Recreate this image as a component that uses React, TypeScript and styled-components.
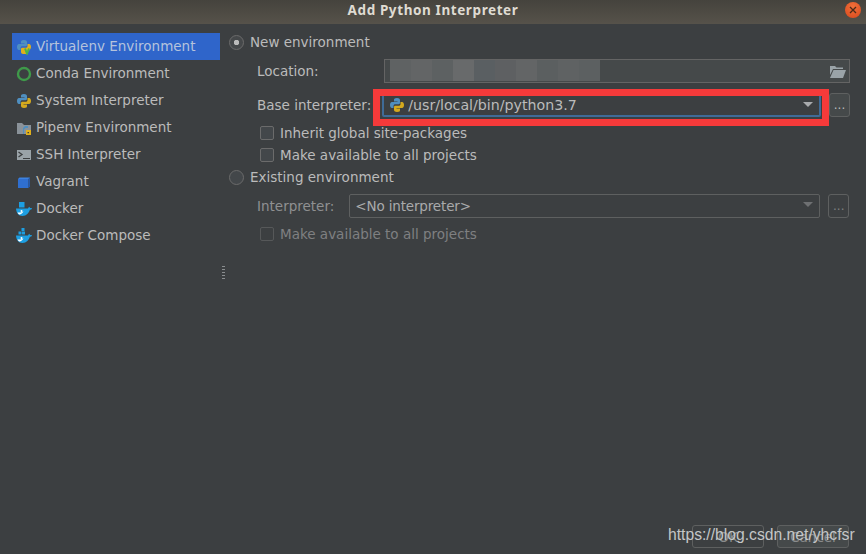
import styled, { createGlobalStyle } from "styled-components";

const GlobalStyle = createGlobalStyle`
  html, body {
    margin: 0;
    padding: 0;
    background: #3c3f41;
  }
  body {
    font-family: "DejaVu Sans", sans-serif;
    font-size: 13.5px;
    color: #bbbbbb;
  }
`;

function PythonIcon() {
  return (
    <svg width="16" height="16" viewBox="0 0 16 16">
      <path
        fill="#4f8fc0"
        d="M8 1C5.2 1 5 2 5 3v1.5h3.5V5H3C1.5 5 1 6.5 1 8s.5 3 2 3h1.5V9c0-1.2.8-1.800 1.800-1.800h3.400c.9 0 1.300-.6 1.300-1.400V3c0-1.200-1.300-2-3-2z"
      />
      <path
        fill="#d4a91e"
        d="M8 15c2.800 0 3-1 3-2v-1.500H7.500V11H13c1.500 0 2-1.500 2-3s-.5-3-2-3h-1.500v2c0 1.200-.8 1.800-1.800 1.800H6.300C5.400 8.800 5 9.400 5 10.200V13c0 1.200 1.300 2 3 2z"
      />
    </svg>
  );
}

function VirtualenvIcon() {
  return (
    <svg width="16" height="16" viewBox="0 0 16 16">
      <path
        fill="#4f8fc0"
        d="M8 1C5.200 1 5 2 5 3v1.500h3.500V5H3C1.500 5 1 6.500 1 8s.5 3 2 3h1.500V9c0-1.200.8-1.800 1.800-1.800h3.400c.9 0 1.300-.6 1.300-1.400V3c0-1.200-1.300-2-3-2z"
      />
      <path
        fill="#e0b01c"
        d="M7 15c-1 0-2-.8-2-2v-2.800c0-.8.4-1.400 1.300-1.400h3.400c1 0 1.800-.6 1.800-1.800V5H13c1.500 0 2 1.500 2 3 0 1-.5 2-1 2.500L10 15z"
      />
      <path fill="none" stroke="#49b54a" strokeWidth="2" d="M9 9.500l2 5 2-5" />
    </svg>
  );
}

function CondaIcon() {
  return (
    <svg width="16" height="16" viewBox="0 0 16 16">
      <circle cx="8" cy="8" r="6" fill="none" stroke="#3f9a4a" strokeWidth="2.400" />
    </svg>
  );
}

function PipenvIcon() {
  return (
    <svg width="16" height="16" viewBox="0 0 16 16">
      <path fill="#8a9299" d="M1 3h5l2 2h7v9H1z" />
      <path fill="#4f8fc0" d="M9 6h3v2H9.500L8 9.500V14H7V8z" />
      <path fill="#e0b01c" d="M10 10h5v5H10z" />
      <path fill="#3c3f41" d="M11.500 12h1.500v1.300h-1.500z" />
    </svg>
  );
}

function SshIcon() {
  return (
    <svg width="16" height="16" viewBox="0 0 16 16">
      <path fill="#9aa3a8" d="M1 3h14v10H1z" />
      <path fill="none" stroke="#3c3f41" strokeWidth="1.300" d="M2.500 5l3.500 2.500L2.500 10" />
      <path fill="#3c3f41" d="M7 11h7v1H7z" />
    </svg>
  );
}

function VagrantIcon() {
  return (
    <svg width="16" height="16" viewBox="0 0 16 16">
      <path fill="#2f6fd0" d="M2 5h10.500v9H2z" />
      <path fill="#3c82e0" d="M2 5l1.500-1.500H14L12.500 5z" />
      <path fill="#2459aa" d="M12.500 5L14 3.500v9L12.500 14z" />
    </svg>
  );
}

function DockerIcon({ compose }: { compose?: boolean }) {
  return (
    <svg width="16" height="16" viewBox="0 0 16 16">
      {compose ? (
        <path fill="#1d9fe2" d="M5.500 0h3v3h-3zM2.500 3.500h3v3h-3zM6 3.500h3v3H6z" />
      ) : (
        <path fill="#1d9fe2" d="M3 1h5.500v5.500H3z" />
      )}
      <path
        fill="#1d9fe2"
        d="M0 7.500h12c.3-1 .9-1.500 1.300-1.800.4.5.7 1 .7 1.500.6-.2 1.400-.2 2 .2-.5 1-1.300 1.400-2.200 1.400C13 12 10.500 15 6.500 15 2.500 15 .3 12 0 7.500z"
      />
      <path fill="#ffffff" d="M1.500 11.500c2 .3 4.500 0 6-1.200-.8 2.200-3 3.500-4.300 3.200-.7-.4-1.300-1.200-1.700-2z" />
      <circle cx="5.500" cy="10" r="1" fill="#ffffff" />
    </svg>
  );
}

const items = [
  { label: "Virtualenv Environment", icon: <VirtualenvIcon />, selected: true },
  { label: "Conda Environment", icon: <CondaIcon /> },
  { label: "System Interpreter", icon: <PythonIcon /> },
  { label: "Pipenv Environment", icon: <PipenvIcon /> },
  { label: "SSH Interpreter", icon: <SshIcon /> },
  { label: "Vagrant", icon: <VagrantIcon /> },
  { label: "Docker", icon: <DockerIcon /> },
  { label: "Docker Compose", icon: <DockerIcon compose /> },
];

const mosaic = ["#5f6263", "#636566", "#5d6162", "#686a6b", "#5a5f62", "#5e6062", "#636566", "#5b5f60", "#5f6263", "#5c6061"];

export default function App() {
  return (
    <Dialog>
      <GlobalStyle />
      <TitleBar>
        Add Python Interpreter
        <CloseButton>
          <svg width="8" height="8" viewBox="0 0 8 8">
            <path stroke="#4a2a18" strokeWidth="1.300" d="M1 1l6 6M7 1L1 7" />
          </svg>
        </CloseButton>
      </TitleBar>
      <Body>
        <Sidebar>
          {items.map((item) => (
            <SideItem key={item.label} $selected={item.selected}>
              {item.icon}
              <SideLabel>{item.label}</SideLabel>
            </SideItem>
          ))}
        </Sidebar>
        <Splitter />
        <Main>
          <RadioRow>
            <Radio $checked />
            New environment
          </RadioRow>
          <LocationRow>
            <FieldLabel>Location:</FieldLabel>
            <LocationField>
              <Mosaic>
                {mosaic.map((c, i) => (
                  <MosaicCell key={i} $color={c} />
                ))}
              </Mosaic>
              <svg width="16" height="13" viewBox="0 0 16 13">
                <path fill="#9aa3a8" d="M0 1h5l1.500 1.500H13V4H3L0 10z" />
                <path fill="#9aa3a8" d="M3.500 5H16l-3 8H0z" />
              </svg>
            </LocationField>
          </LocationRow>
          <BaseRow>
            <FieldLabel>Base interpreter:</FieldLabel>
            <FocusCombo>
              <PythonSmall>
                <PythonIcon />
              </PythonSmall>
              /usr/local/bin/python3.7
              <Arrow />
            </FocusCombo>
            <DotsButton>...</DotsButton>
          </BaseRow>
          <ChecksGroup>
            <CheckRow>
              <Check />
              Inherit global site-packages
            </CheckRow>
            <CheckRow>
              <Check />
              Make available to all projects
            </CheckRow>
          </ChecksGroup>
          <RadioRow $second>
            <Radio />
            Existing environment
          </RadioRow>
          <InterpreterRow>
            <FieldLabel $disabled>Interpreter:</FieldLabel>
            <DisabledCombo>
              &lt;No interpreter&gt;
              <Arrow $disabled />
            </DisabledCombo>
            <DotsButton $disabled>...</DotsButton>
          </InterpreterRow>
          <LastCheck>
            <CheckRow $disabled>
              <Check $disabled />
              Make available to all projects
            </CheckRow>
          </LastCheck>
        </Main>
      </Body>
      <Footer>
        <FooterButton>OK</FooterButton>
        <FooterButton $filled>Cancel</FooterButton>
      </Footer>
      <Highlight />
      <Watermark>https://blog.csdn.net/yhcfsr</Watermark>
    </Dialog>
  );
}

const Dialog = styled.div`
  position: relative;
  width: 866px;
  height: 554px;
  overflow: hidden;
  display: flex;
  flex-direction: column;
  background: #3c3f41;
`;

const TitleBar = styled.div`
  position: relative;
  flex: none;
  box-sizing: border-box;
  height: 24px;
  padding-bottom: 4px;
  display: flex;
  align-items: center;
  justify-content: center;
  background: linear-gradient(#45433d, #56524a);
  color: #dfdbd2;
  font-family: "Noto Sans", sans-serif;
  font-weight: 700;
  font-size: 13.500px;
  letter-spacing: 0.600px;
`;

const CloseButton = styled.div`
  position: absolute;
  right: 5px;
  top: 2px;
  width: 16px;
  height: 16px;
  border-radius: 50%;
  display: flex;
  align-items: center;
  justify-content: center;
  background: radial-gradient(circle at 50% 30%, #f0703a, #d9481c);
`;

const Body = styled.div`
  flex: 1;
  display: flex;
  min-height: 0;
`;

const Sidebar = styled.div`
  flex: none;
  width: 208px;
  margin-left: 12px;
  padding-top: 9px;
`;

const SideItem = styled.div<{ $selected?: boolean }>`
  height: 27px;
  display: flex;
  align-items: center;
  gap: 4px;
  padding-left: 4px;
  background: ${(p) => (p.$selected ? "#2f65ca" : "transparent")};
  color: ${(p) => (p.$selected ? "#b5c3dc" : "#bbbbbb")};
  white-space: nowrap;
`;

const SideLabel = styled.span`
  margin-top: -2px;
`;

const Splitter = styled.div`
  flex: none;
  align-self: flex-start;
  width: 3px;
  height: 14px;
  margin: 242px 2px 0 2px;
  background: repeating-linear-gradient(#8a8d8f 0 1px, transparent 1px 3px);
`;

const Main = styled.div`
  flex: 1;
  min-width: 0;
  padding: 9px 16px 0 2px;
  display: flex;
  flex-direction: column;
`;

const RadioRow = styled.div<{ $second?: boolean }>`
  height: 18px;
  display: flex;
  align-items: center;
  gap: 6px;
  margin-top: ${(p) => (p.$second ? "2px" : "0")};
`;

const Radio = styled.span<{ $checked?: boolean }>`
  flex: none;
  box-sizing: border-box;
  width: 15px;
  height: 15px;
  border-radius: 50%;
  border: 1px solid #6b6b6b;
  background: ${(p) =>
    p.$checked ? "radial-gradient(circle, #bbbbbb 0 2.500px, #45484a 3px)" : "#43474a"};
`;

const FieldLabel = styled.span<{ $disabled?: boolean }>`
  flex: none;
  color: ${(p) => (p.$disabled ? "#8f9091" : "#bbbbbb")};
`;

const LocationRow = styled.div`
  display: flex;
  align-items: center;
  height: 24px;
  margin-top: 8px;
  padding-left: 28px;
  gap: 65px;
`;

const LocationField = styled.div`
  box-sizing: border-box;
  flex: 1;
  height: 24px;
  display: flex;
  align-items: center;
  justify-content: space-between;
  padding-right: 3px;
  background: #45494a;
  border: 1px solid #646464;
`;

const Mosaic = styled.div`
  display: flex;
  height: 21px;
  margin: -2px 0 0 5px;
`;

const MosaicCell = styled.span<{ $color: string }>`
  width: 21px;
  background: ${(p) => p.$color};
`;

const BaseRow = styled.div`
  display: flex;
  align-items: center;
  height: 24px;
  margin-top: 10px;
  padding-left: 28px;
`;

const FocusCombo = styled.div`
  position: relative;
  box-sizing: border-box;
  width: 439px;
  height: 24px;
  margin-left: 11px;
  display: flex;
  align-items: center;
  padding-left: 5px;
  gap: 3px;
  border: 2px solid #3f6b98;
  border-radius: 2px;
  background: #3c3f41;
  font-size: 14.200px;
`;

const PythonSmall = styled.span`
  display: flex;
`;

const Arrow = styled.span<{ $disabled?: boolean }>`
  position: absolute;
  right: 6px;
  top: 7px;
  width: 0;
  height: 0;
  border-left: 5px solid transparent;
  border-right: 5px solid transparent;
  border-top: 5px solid ${(p) => (p.$disabled ? "#6e7072" : "#a9abad")};
`;

const DotsButton = styled.div<{ $disabled?: boolean }>`
  flex: none;
  box-sizing: border-box;
  width: 21px;
  height: 24px;
  margin-left: 8px;
  display: flex;
  align-items: center;
  justify-content: center;
  border: 1px solid #5e6060;
  border-radius: 3px;
  background: ${(p) => (p.$disabled ? "transparent" : "#45494a")};
  color: ${(p) => (p.$disabled ? "#808182" : "#bbbbbb")};
  font-size: 12px;
`;

const ChecksGroup = styled.div`
  margin-top: 5px;
`;

const LastCheck = styled.div`
  margin-top: 5px;
`;

const CheckRow = styled.div<{ $disabled?: boolean }>`
  height: 22px;
  display: flex;
  align-items: center;
  gap: 6px;
  padding-left: 31px;
  color: ${(p) => (p.$disabled ? "#7f8081" : "#bbbbbb")};
`;

const Check = styled.span<{ $disabled?: boolean }>`
  flex: none;
  box-sizing: border-box;
  width: 14px;
  height: 14px;
  border-radius: 2px;
  border: 1px solid ${(p) => (p.$disabled ? "#565859" : "#6b6b6b")};
  background: ${(p) => (p.$disabled ? "transparent" : "#43474a")};
`;

const InterpreterRow = styled.div`
  display: flex;
  align-items: center;
  height: 24px;
  margin-top: 8px;
  padding-left: 28px;
`;

const DisabledCombo = styled.div`
  position: relative;
  box-sizing: border-box;
  width: 471px;
  height: 24px;
  margin-left: 15px;
  display: flex;
  align-items: center;
  padding-left: 5px;
  border: 1px solid #5e6060;
  border-radius: 2px;
  color: #a9aaab;
  letter-spacing: -0.150px;
`;

const Footer = styled.div`
  flex: none;
  height: 26px;
  padding: 0 17px 3px 0;
  display: flex;
  justify-content: flex-end;
  gap: 13px;
`;

const FooterButton = styled.div<{ $filled?: boolean }>`
  box-sizing: border-box;
  width: 72px;
  height: 23px;
  display: flex;
  align-items: center;
  justify-content: center;
  border: 1px solid #5e6060;
  border-radius: 3px;
  background: ${(p) => (p.$filled ? "#45494a" : "transparent")};
  color: #8a8b8c;
`;

const Highlight = styled.div`
  position: absolute;
  left: 373px;
  top: 89px;
  box-sizing: border-box;
  width: 456px;
  height: 37px;
  border: 7px solid #f53a3a;
`;

const Watermark = styled.div`
  position: absolute;
  left: 668px;
  top: 526px;
  font-family: "Liberation Sans", sans-serif;
  font-size: 15.700px;
  color: #c4c6c7;
  white-space: nowrap;
`;
